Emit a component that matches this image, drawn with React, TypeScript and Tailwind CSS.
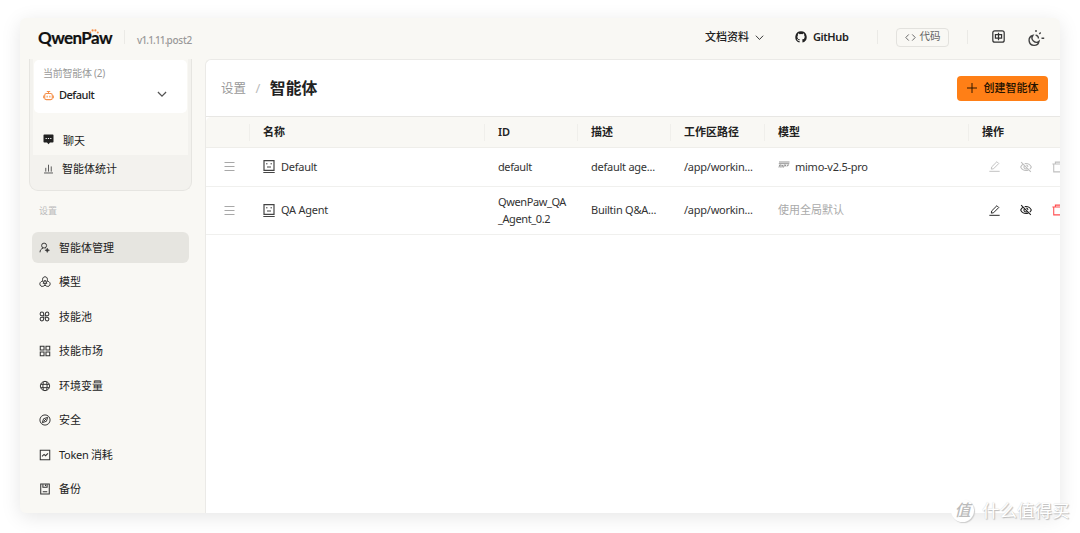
import type { ReactNode } from 'react';

type IconProps = { size?: number; className?: string; sw?: number; children: ReactNode };

function Icon({ size = 12, className = '', sw = 1.4, children }: IconProps) {
  return (
    <svg
      width={size}
      height={size}
      viewBox="0 0 16 16"
      fill="none"
      stroke="currentColor"
      strokeWidth={sw}
      className={`shrink-0 ${className}`}
    >
      {children}
    </svg>
  );
}

const ManageIcon = () => (
  <Icon size={11}>
    <circle cx="7.4" cy="5.2" r="3.6" />
    <path d="M1.5 15c0-3 1.6-5.2 4.4-6.1M9.2 8.6l.8.4" />
    <path d="M12 8.8l1 2.2 2.4 1-2.4 1-1 2.4-1-2.4-2.4-1 2.4-1z" fill="currentColor" strokeWidth=".6" />
  </Icon>
);

const ModelIcon = () => (
  <Icon size={12} sw={1.3}>
    <path d="M5 6.6C4.2 3.4 5.4 1 8 1s3.8 2.4 3 5.6c3.2.9 4.7 3.2 3.5 5.6-1.2 2.3-4.1 2.2-6.5 0-2.4 2.2-5.3 2.3-6.5 0C.3 9.8 1.8 7.5 5 6.6z" />
    <path d="M8 5.4l2.5 4.4h-5z" />
    <path d="M8 9.8v2.4M5 6.6l1 1.8M11 6.6l-1 1.8" />
  </Icon>
);

const PoolIcon = () => (
  <Icon size={11} sw={1.5}>
    <path d="M6.8 6.8H4.2a2.6 2.6 0 1 1 2.6-2.6zM9.2 6.8V4.2a2.6 2.6 0 1 1 2.6 2.6zM6.8 9.2v2.6a2.6 2.6 0 1 1-2.6-2.6zM9.2 9.2h2.6a2.6 2.6 0 1 1-2.6 2.6z" />
  </Icon>
);

const MarketIcon = () => (
  <Icon size={12}>
    <path d="M1.7 1.7h5v5h-5zM9.3 1.7h5v5h-5zM1.7 9.3h5v5h-5zM9.3 9.3h5v5h-5z" />
  </Icon>
);

const GlobeIcon = () => (
  <Icon sw={1.3}>
    <circle cx="8" cy="8" r="6.2" />
    <ellipse cx="8" cy="8" rx="2.8" ry="6.2" />
    <path d="M2.4 5.8h11.2M2.4 10.2h11.2" />
  </Icon>
);

const CompassIcon = () => (
  <Icon sw={1.3}>
    <circle cx="8" cy="8" r="6.8" />
    <path d="M11.6 4.4l-1.7 5.3-5.5 1.9 1.7-5.3zM6.1 9.9l3.6-3.6" />
  </Icon>
);

const TokenIcon = () => (
  <Icon>
    <path d="M1.7 1.7h12.6v12.6H1.7z" />
    <path d="M4 9.8l2.7-2.6 2 1.8L12 5.8" />
  </Icon>
);

const BackupIcon = () => (
  <Icon>
    <path d="M2.3 1.3h11.4v13.4H2.3z" />
    <path d="M5.2 1.5v4.2h5.6V1.5M8.6 2v2M5 11.6h6" />
  </Icon>
);

const ChevronIcon = ({ size = 10, sw = 1.5 }: { size?: number; sw?: number }) => (
  <Icon size={size} sw={sw}>
    <path d="M1.5 4.8L8 11.5l6.5-6.7" />
  </Icon>
);

const RobotIcon = () => (
  <Icon size={11} sw={1.6} className="text-[#f5904a]">
    <rect x="2.5" y="5" width="11" height="9" rx="2.5" />
    <path d="M8 2v3M5.5 2.2h5M1 8v4M15 8v4M6 8.5v2.500M10 8.5v2.500" />
  </Icon>
);

const DragIcon = () => (
  <svg width="11" height="11" viewBox="0 0 11 11" stroke="#a8a8a8" className="shrink-0">
    <path d="M.5 1.5h10M.5 5.5h10M.5 9.5h10" />
  </svg>
);

const FaceIcon = () => (
  <svg width="12" height="14" viewBox="0 0 12 14" fill="none" stroke="#444" className="shrink-0">
    <path d="M1 .6h10v9.800H1z" strokeWidth="1.2" />
    <path d="M.3 12.5h11.400" strokeWidth="1.2" />
    <path d="M3 3.8h1.500M7.5 3.8h1.500M4 7h4" />
  </svg>
);

const PencilIcon = () => (
  <Icon size={11} sw={1.4}>
    <path d="M3.4 11.8l.5-3.200 7.600-7.600 2.700 2.700-7.600 7.600zM.5 15h15" />
  </Icon>
);

const HiddenIcon = () => (
  <Icon size={12} sw={1.4}>
    <path d="M4.3 4.2C2.8 5.1 1.6 6.4.9 8c1.4 3 4 4.7 7.1 4.7 1.2 0 2.3-.3 3.3-.7M6.3 3.5A8 8 0 0 1 8 3.3c3.1 0 5.7 1.7 7.1 4.7-.5 1-1.2 2-2 2.7" />
    <path d="M5.7 6.5a2.7 2.7 0 0 0 3.8 3.7M8.3 5.4a2.6 2.6 0 0 1 2.3 2.5M1.5 1.5l13 13" />
  </Icon>
);

const TrashIcon = () => (
  <Icon size={12} sw={1.4}>
    <path d="M.5 4h15M4.5 4V1.5h7V4M2.3 4v10.5h11.400V4" />
  </Icon>
);

const nav = [
  { label: '智能体管理', icon: <ManageIcon />, active: true },
  { label: '模型', icon: <ModelIcon /> },
  { label: '技能池', icon: <PoolIcon /> },
  { label: '技能市场', icon: <MarketIcon /> },
  { label: '环境变量', icon: <GlobeIcon /> },
  { label: '安全', icon: <CompassIcon /> },
  { label: 'Token 消耗', icon: <TokenIcon />, tight: true },
  { label: '备份', icon: <BackupIcon /> },
];

const columns = ['', '名称', 'ID', '描述', '工作区路径', '模型', '操作'];

const grid = 'grid grid-cols-[44px_235px_93px_93px_94px_204px_140px] items-center';

function Header() {
  return (
    <header className="flex h-[41px] shrink-0 items-center pb-[3px] pl-[18px]">
      <div className="relative flex h-5 w-[74px] items-center pt-px">
        <span className="font-['Lato'] text-[17px] leading-5 font-bold tracking-[-0.6px] text-[#111] [-webkit-text-stroke:0.2px_#111]">QwenPaw</span>
        <svg width="10" height="5" viewBox="0 0 10 5" fill="#f5904a" className="absolute top-[2px] left-[51px]">
          <circle cx="1.2" cy="3.4" r="1" />
          <circle cx="3.6" cy="1.4" r="1.1" />
          <circle cx="6.4" cy="1.4" r="1.1" />
          <circle cx="8.8" cy="3.4" r="1" />
        </svg>
      </div>
      <div className="ml-3 h-[14px] w-px bg-[#ebeae6]" />
      <span className="mt-[6px] ml-3 text-[10px] font-medium tracking-[-0.85px] text-[#999]">
        v1.1.11.<span className="tracking-[-0.25px]">post2</span>
      </span>

      <div className="ml-auto flex items-center">
        <span className="mr-1.5 text-[11px] font-medium">文档资料</span>
        <ChevronIcon size={9} sw={1.6} />
        <svg width="12" height="12" viewBox="0 0 16 16" fill="#222" className="ml-[31px]">
          <path d="M8 .4a7.600 7.600 0 0 0-2.400 14.800c.4.100.5-.2.500-.4v-1.500c-2.100.500-2.600-.9-2.600-.9-.3-.9-.8-1.100-.8-1.100-.7-.5.100-.5.100-.5.800.1 1.200.8 1.200.8.700 1.200 1.800.8 2.200.6.100-.5.300-.8.500-1-1.700-.2-3.500-.8-3.500-3.700 0-.8.300-1.500.8-2-.1-.2-.3-1 .1-2 0 0 .6-.2 2.100.8a7 7 0 0 1 3.700 0c1.500-1 2.100-.8 2.100-.8.400 1 .2 1.800.1 2 .5.500.8 1.200.8 2 0 2.900-1.800 3.500-3.500 3.700.3.200.5.700.5 1.400v2.200c0 .2.100.5.500.4A7.600 7.600 0 0 0 8 .4z" />
        </svg>
        <span className="ml-1.5 w-[36px] text-[11px] font-semibold tracking-[-0.4px]">GitHub</span>
        <div className="ml-[28px] h-[14px] w-px bg-[#ebeae6]" />
        <button className="ml-[18px] flex h-[19px] w-[53px] items-center justify-center gap-1 rounded-[4px] border border-[#e3e2de] text-[10.5px] text-[#666]">
          <Icon size={11} sw={1.4}>
            <path d="M5.5 3.5L1.2 8l4.300 4.500M10.5 3.5L14.8 8l-4.300 4.500" />
          </Icon>
          代码
        </button>
        <div className="ml-[18px] h-[14px] w-px bg-[#ebeae6]" />
        <Icon size={13} sw={1.5} className="mb-px ml-6 text-[#333]">
          <rect x="1" y="1" width="14" height="14" rx="2.5" />
          <path d="M4.2 5.6h7.600v4.300H4.200zM8 3.500v9" />
        </Icon>
        <svg width="18" height="18" viewBox="0 0 18 18" fill="none" stroke="#444" strokeWidth="1.4" className="mt-px mr-[15px] ml-[22px]">
          <path d="M5.800 6.500A5 5 0 1 0 12 12.300 4.300 4.300 0 0 1 5.800 6.500z" />
          <path d="M8.600 6.200a3 3 0 0 1 2.800 3.300M9 1v2M13.700 3.400l-1.400 1.500M14.500 9.200h2.700" />
        </svg>
      </div>
    </header>
  );
}

function Sidebar() {
  return (
    <aside className="flex w-[185px] shrink-0 flex-col pl-[9px]">
      <section className="h-[132px] w-[163px] rounded-b-[9px] border border-t-0 border-[#e6e5e1] bg-[#f3f2ee] px-[3px]">
        <div className="h-[96px] bg-[#f9f8f4] px-px pt-px">
          <div className="h-[53px] rounded-[5px] bg-white px-[9px] pt-[5px]">
            <div className="text-[10px] leading-4 tracking-[-0.25px] text-[#999]">当前智能体 (2)</div>
            <div className="mt-[6px] flex h-4 items-center">
              <RobotIcon />
              <span className="ml-[5px] flex-1 text-[11px] font-medium tracking-[-0.5px]">Default</span>
              <span className="mr-[11px] mb-[2px] text-[#555]">
                <ChevronIcon size={10} sw={2} />
              </span>
            </div>
          </div>
          <div className="mt-[17px] flex h-[22px] items-center pl-[9px]">
            <svg width="11" height="11" viewBox="0 0 11 11" className="mb-[4px] shrink-0">
              <path d="M1.300.5h8.400q.8 0 .8.800v6.400q0 .8-.8.800H7L5.500 10.300 4 8.500H1.300q-.8 0-.8-.8V1.300q0-.8.800-.8z" fill="#222" />
              <path d="M2.600 4.500h1.200M4.900 4.500h1.200M7.200 4.500h1.200" stroke="#fff" />
            </svg>
            <span className="ml-[9px] text-[11px]">聊天</span>
          </div>
        </div>
        <div className="flex h-[27px] items-center pl-[10px]">
          <Icon size={11} className="text-[#555]">
            <path d="M1.5 14.5h13M4 12.5V7M8 12.5V2.500M12 12.500V5" />
          </Icon>
          <span className="ml-[8px] pt-px text-[11px]">智能体统计</span>
        </div>
      </section>
      <div className="mt-[12px] ml-[10px] h-4 text-[9px] leading-4 text-[#bbb]">设置</div>
      <nav className="mt-[13px] ml-[3px] flex w-[157px] flex-col gap-[3.5px]">
        {nav.map((item) => (
          <a
            key={item.label}
            className={`flex h-[31px] items-center rounded-[6px] pl-[7px] ${item.active ? 'bg-[#e6e5e0]' : ''}`}
          >
            <span className="flex w-[11px] justify-center text-[#333]">{item.icon}</span>
            <span className={`ml-[9px] pt-px text-[11px] ${item.tight ? 'tracking-[-0.3px]' : ''}`}>{item.label}</span>
          </a>
        ))}
      </nav>
    </aside>
  );
}

type RowProps = { name: string; id: ReactNode; desc: string; model: ReactNode; height: string; locked?: boolean };

function Row({ name, id, desc, model, height, locked }: RowProps) {
  return (
    <div className={`${grid} ${height} border-b border-[#f0f0ee] text-[11px] tracking-[-0.25px] text-[#333]`}>
      <div className="flex pb-px pl-[18px]"><DragIcon /></div>
      <div className="flex items-center gap-[6px] pl-[13px]"><FaceIcon /><span>{name}</span></div>
      <div className="pb-[2px] pl-[13px] leading-[17px] tracking-[-0.4px]">{id}</div>
      <div className="pl-[13px] whitespace-nowrap">{desc}</div>
      <div className="pl-[13px] whitespace-nowrap">/app/workin...</div>
      <div className="flex items-center pl-[13px]">{model}</div>
      <div className={`flex items-center pb-px pl-[20px] ${locked ? 'text-[#bfbfbf]' : 'text-[#222]'}`}>
        <PencilIcon />
        <span className="ml-[20px]"><HiddenIcon /></span>
        <span className={`ml-[20px] ${locked ? '' : 'text-[#ff4d4f]'}`}><TrashIcon /></span>
      </div>
    </div>
  );
}

function Content() {
  return (
    <main className="min-w-0 flex-1 overflow-hidden rounded-tl-[6px] border-t border-l border-[#ebeae7] bg-white">
      <div className="flex h-[56px] items-center pr-3 pl-[15px]">
        <span className="pt-[2px] text-[12.5px] text-[#999]">设置</span>
        <span className="mx-[9.5px] pt-[2px] text-[13px] text-[#bbb]">/</span>
        <h1 className="pt-[2px] text-[15.8px] font-bold text-[#222]">智能体</h1>
        <button className="ml-auto flex h-[25px] w-[91px] items-center justify-center gap-[7px] rounded-[4px] bg-[#ff7f16] text-[11px] font-medium whitespace-nowrap text-[#221100]">
          <Icon size={10} sw={1.5}><path d="M8 0v16M0 8h16" /></Icon>
          创建智能体
        </button>
      </div>
      <div className="border-t border-[#e8e7e4]">
        <div className={`${grid} h-[31px] rounded-tl-[5px] border-b border-[#efeeea] bg-[#f9f8f4] text-[11px] font-semibold`}>
          {columns.map((label, i) => (
            <div key={i} className={`flex h-[17px] items-center pt-px pl-[13px] ${i < columns.length - 1 ? 'border-r border-[#f0efeb]' : ''}`}>
              {label}
            </div>
          ))}
        </div>
        <Row
          name="Default"
          id="default"
          desc="default age..."
          height="h-[39px]"
          locked
          model={
            <>
              <svg width="12" height="8" viewBox="0 0 12 8" fill="none" stroke="#888" strokeWidth=".9" className="mr-[5px] -mt-1">
                <path d="M1 1h10.500M.8 2.700h10.500M1 6.500l.6-2.500h1.600l-.5 2.500M4 6.500L4.600 4M5.500 6.500L6.200 4h1.500l-.6 1.500M9 5.500L9.500 4H11" />
              </svg>
              <span>mimo-v2.5-pro</span>
            </>
          }
        />
        <Row
          name="QA Agent"
          id={<>QwenPaw_QA<br />_Agent_0.2</>}
          desc="Builtin Q&A..."
          height="h-[48px]"
          model={<span className="tracking-normal text-[#aaa]">使用全局默认</span>}
        />
      </div>
    </main>
  );
}

export default function App() {
  return (
    <div className="relative h-[533px] w-[1080px] overflow-hidden bg-white px-5 pt-[18px] font-['Noto_Sans','Noto_Sans_CJK_SC',sans-serif] text-[#222]">
      <div className="flex h-[495px] w-[1040px] flex-col overflow-hidden rounded-[6px] bg-[#f9f8f4] shadow-[0_4px_20px_rgba(0,0,0,0.1)]">
        <Header />
        <div className="flex min-h-0 flex-1">
          <Sidebar />
          <Content />
        </div>
      </div>
      <div className="absolute top-[498px] left-[951px] flex items-center text-white [text-shadow:1px_1px_1px_#bbb,0_0_1px_#ccc]">
        <span className="flex size-[23px] items-center justify-center rounded-full bg-white text-[16px] leading-none font-medium text-[#bbb] italic shadow-[1px_1px_1px_#ccc] [text-shadow:none]">值</span>
        <span className="ml-2 text-[17.5px] leading-6 whitespace-nowrap">什么值得买</span>
      </div>
    </div>
  );
}
